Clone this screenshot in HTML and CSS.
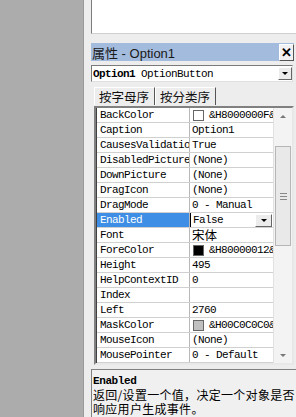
FILE: index.html
```html
<!DOCTYPE html>
<html lang="zh">
<head>
  <meta charset="UTF-8">
  <title>属性 - Option1</title>
  <link rel="stylesheet" href="styles.css">
</head>
<body>
  <div class="desk"></div>
  <div class="dock">
    <div class="code-box"></div>

    <div class="props">
      <div class="title-bar">
        <span>属性 - Option1</span>
        <span class="close">&#x2715;</span>
      </div>

      <div class="object-combo">
        <span class="obj-name">Option1</span>
        <span class="obj-type">OptionButton</span>
        <span class="drop-btn"><i class="tri"></i></span>
      </div>

      <div class="tabs">
        <div class="tab active">按字母序</div>
        <div class="tab">按分类序</div>
      </div>

      <div class="tab-page">
        <div class="grid-frame">
          <div class="rows" id="rows"></div>
          <div class="scrollbar">
            <div class="arrow up"></div>
            <div class="track">
              <div class="thumb"><div class="grip"></div></div>
            </div>
            <div class="arrow down"></div>
          </div>
        </div>
      </div>

      <div class="desc">
        <div class="desc-title">Enabled</div>
        <div class="desc-text">返回/设置一个值，决定一个对象是否响应用户生成事件。</div>
      </div>
    </div>
  </div>

  <script>
    const props = [
      ['BackColor', '&H8000000F&', '#ffffff'],
      ['Caption', 'Option1'],
      ['CausesValidation', 'True'],
      ['DisabledPicture', '(None)'],
      ['DownPicture', '(None)'],
      ['DragIcon', '(None)'],
      ['DragMode', '0 - Manual'],
      ['Enabled', 'False'],
      ['Font', '宋体'],
      ['ForeColor', '&H80000012&', '#000000'],
      ['Height', '495'],
      ['HelpContextID', '0'],
      ['Index', ''],
      ['Left', '2760'],
      ['MaskColor', '&H00C0C0C0&', '#c0c0c0'],
      ['MouseIcon', '(None)'],
      ['MousePointer', '0 - Default']
    ];

    const rows = document.getElementById('rows');
    props.forEach(([name, value, swatch]) => {
      const row = document.createElement('div');
      row.classList.add('row');
      if (name === 'Enabled') row.classList.add('selected');

      const nameCell = document.createElement('div');
      nameCell.classList.add('name');
      nameCell.textContent = name;
      row.appendChild(nameCell);

      const valueCell = document.createElement('div');
      valueCell.classList.add('value');
      if (name === 'Font') valueCell.classList.add('cjk');

      if (swatch) {
        const box = document.createElement('span');
        box.classList.add('swatch');
        box.style.backgroundColor = swatch;
        valueCell.appendChild(box);
      }
      const text = document.createElement('span');
      text.textContent = value;
      valueCell.appendChild(text);

      if (name === 'Enabled') {
        valueCell.classList.add('editing');
        const btn = document.createElement('span');
        btn.classList.add('drop-btn');
        btn.innerHTML = '<i class="tri"></i>';
        valueCell.appendChild(btn);
      }
      row.appendChild(valueCell);
      rows.appendChild(row);
    });
  </script>
</body>
</html>
```

FILE: styles.css
```css
body {
  margin: 0;
  width: 296px;
  height: 417px;
  overflow: hidden;
  display: flex;
  font-family: "Liberation Sans", "Noto Sans CJK SC", sans-serif;
  color: #000;
}

.desk {
  width: 83px;
  background-color: #acacac;
  border-right: 1px solid #9a9a9a;
}

.dock {
  flex: 1;
  display: flex;
  flex-direction: column;
  background-color: #ededed;
  padding-left: 7px;
}

.code-box {
  flex: none;
  height: 33px;
  background-color: #fff;
  border-left: 1px solid #7c7c7c;
  border-bottom: 1px solid #d0d0d0;
}

.props {
  margin-top: 9px;
  display: flex;
  flex-direction: column;
  flex: none;
}

.title-bar {
  flex: none;
  height: 18px;
  margin-right: 2px;
  background-color: #a3bbdd;
  display: flex;
  align-items: center;
  justify-content: space-between;
  padding-left: 1px;
  font-size: 13px;
  color: #1a1a1a;
}

.close {
  width: 13px;
  height: 15px;
  background-color: #f2f2f2;
  border: 1px solid #fff;
  border-right-color: #555;
  border-bottom-color: #555;
  font-size: 13px;
  font-weight: bold;
  line-height: 15px;
  text-align: center;
  color: #000;
}

.object-combo {
  flex: none;
  height: 15px;
  margin: 4px 3px 0 0;
  background-color: #fff;
  border: 1px solid #7a7a7a;
  border-right-color: #e0e0e0;
  border-bottom-color: #e0e0e0;
  display: flex;
  align-items: center;
  font-family: "Liberation Mono", monospace;
  font-size: 11px;
  letter-spacing: -0.6px;
  padding-left: 1px;
}

.obj-name {
  font-weight: bold;
  margin-right: 6px;
}

.obj-type {
  flex: 1;
}

.drop-btn {
  width: 14px;
  height: 13px;
  background-color: #ececec;
  border: 1px solid #fff;
  border-right-color: #666;
  border-bottom-color: #666;
  display: flex;
  align-items: center;
  justify-content: center;
  box-sizing: border-box;
}

.tri {
  width: 0;
  height: 0;
  border-left: 3px solid transparent;
  border-right: 3px solid transparent;
  border-top: 3px solid #000;
}

.tabs {
  flex: none;
  display: flex;
  margin: 5px 0 0 3px;
  height: 18px;
  font-family: "Noto Sans CJK SC", sans-serif;
  font-size: 12.5px;
}

.tab {
  padding: 0 5px 0 4px;
  line-height: 17px;
  border-left: 1px solid #fff;
  border-top: 1px solid #fff;
  border-right: 1px solid #555;
  color: #111;
}

.tab-page {
  flex: none;
  padding: 1px 2px 4px 3px;
}

.grid-frame {
  display: flex;
  border: 2px solid #808080;
  border-right-color: #e8e8e8;
  border-bottom-color: #e8e8e8;
  background-color: #fff;
}

.rows {
  width: 176px;
  border-left: 1px solid #404040;
}

.row {
  display: flex;
  height: 15px;
  box-sizing: border-box;
  border-bottom: 1px solid #d0d0d0;
  font-family: "Liberation Mono", monospace;
  font-size: 11px;
  letter-spacing: -0.6px;
  line-height: 14px;
}

.name {
  width: 89px;
  padding-left: 3px;
  border-right: 1px solid #b8b8b8;
  overflow: hidden;
  white-space: nowrap;
}

.value {
  flex: 1;
  padding-left: 2px;
  display: flex;
  align-items: center;
  white-space: nowrap;
  overflow: hidden;
}

.value.cjk {
  font-family: "Noto Sans CJK SC", sans-serif;
  font-size: 12.5px;
  letter-spacing: 0;
}

.swatch {
  width: 9px;
  height: 9px;
  border: 1px solid #666;
  margin: 0 5px 0 1px;
  flex-shrink: 0;
}

.row.selected .name {
  background-color: #3d8ee4;
  color: #fff;
}

.value.editing {
  border-left: 1px solid #000;
  justify-content: space-between;
  padding-right: 1px;
}

.value.editing .drop-btn {
  width: 17px;
  height: 13px;
}

.scrollbar {
  width: 18px;
  display: flex;
  flex-direction: column;
  background-color: #f3f3f3;
  border-left: 1px solid #e2e2e2;
}

.arrow {
  height: 16px;
  display: flex;
  align-items: center;
  justify-content: center;
}

.arrow::before {
  content: "";
  width: 0;
  height: 0;
  border-left: 3px solid transparent;
  border-right: 3px solid transparent;
}

.arrow.up::before {
  border-bottom: 3px solid #777;
}

.arrow.down::before {
  border-top: 3px solid #777;
}

.track {
  flex: 1;
  padding-top: 22px;
}

.thumb {
  height: 98px;
  margin: 0 1px;
  background-color: #e9e9e9;
  border: 1px solid #b6b6b6;
  display: flex;
  align-items: center;
  justify-content: center;
}

.grip {
  width: 7px;
  height: 5px;
  border-top: 1px solid #888;
  border-bottom: 1px solid #888;
  position: relative;
}

.grip::after {
  content: "";
  position: absolute;
  left: 0;
  right: 0;
  top: 2px;
  border-top: 1px solid #888;
}

.desc {
  flex: none;
  height: 48px;
  box-sizing: border-box;
  border-top: 1px solid #808080;
  border-left: 1px solid #808080;
  background-color: #f0f0f0;
  padding: 4px 0 0 1px;
}

.desc-title {
  font-family: "Liberation Mono", monospace;
  font-weight: bold;
  font-size: 11px;
  letter-spacing: -0.4px;
  line-height: 14px;
}

.desc-text {
  font-family: "Noto Sans CJK SC", sans-serif;
  font-size: 12px;
  line-height: 14px;
  letter-spacing: 0.3px;
}
```
